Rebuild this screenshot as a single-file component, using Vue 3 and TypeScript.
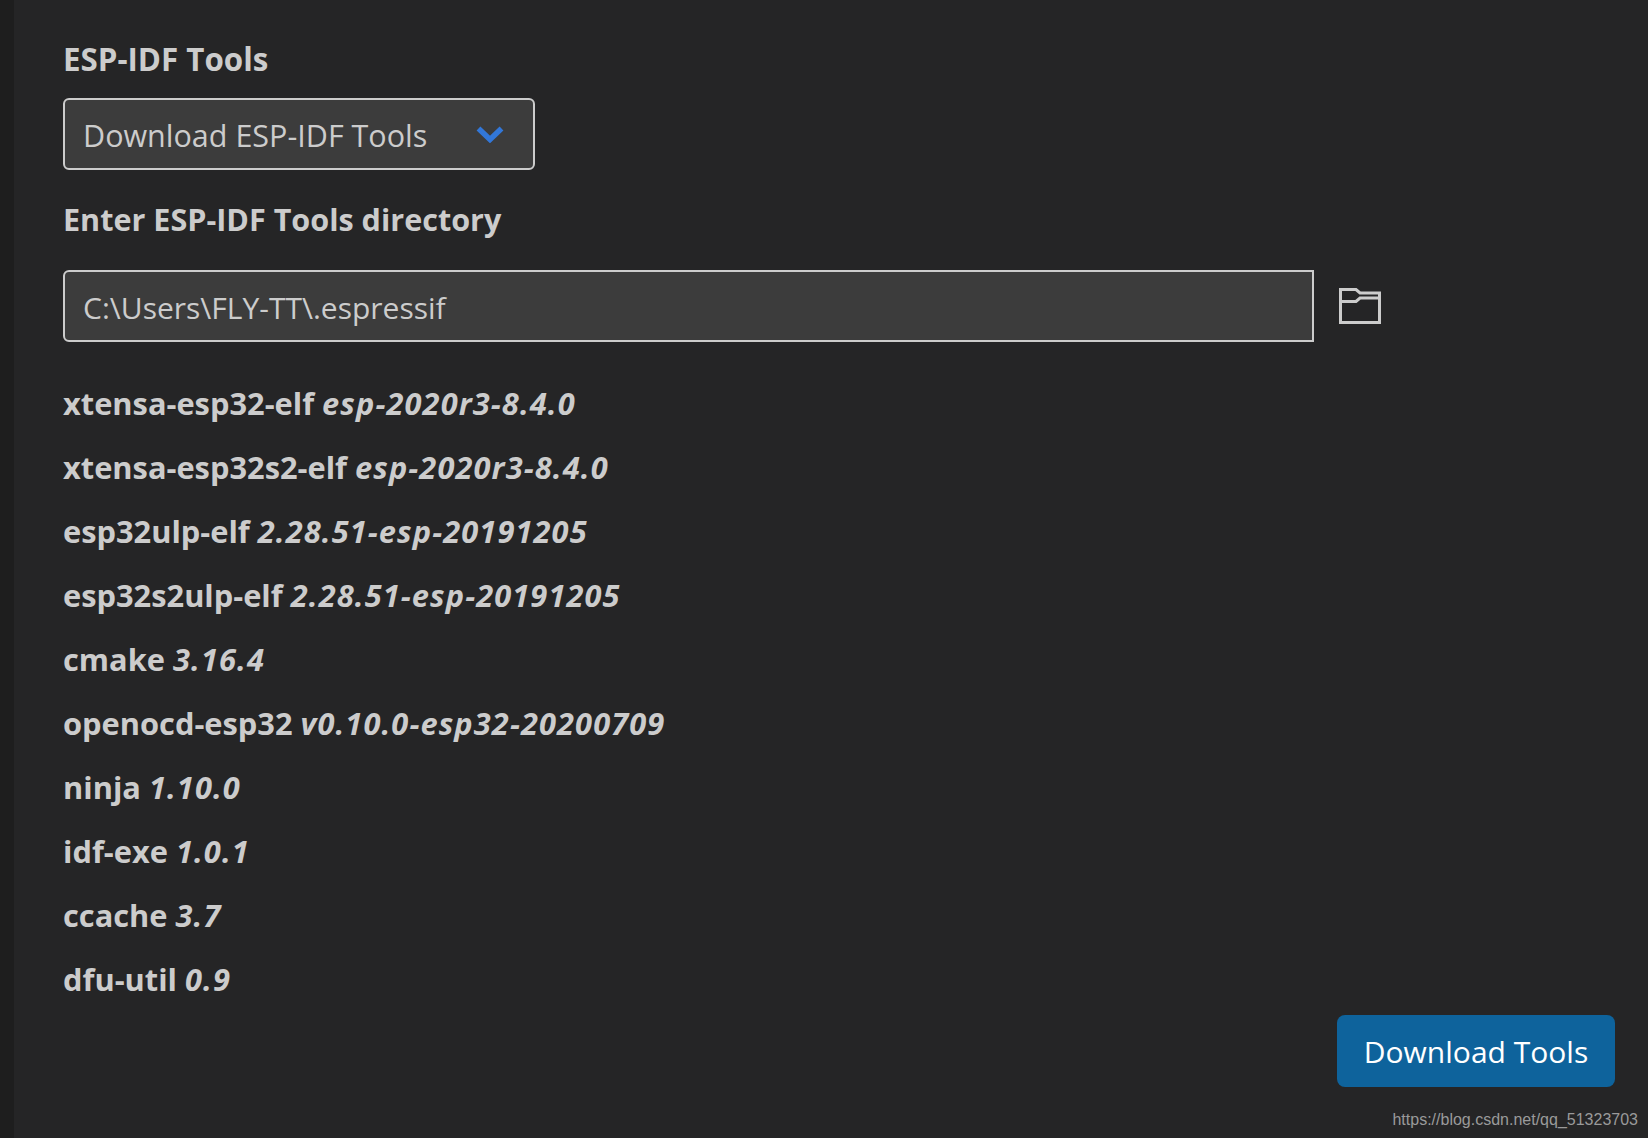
<template>
  <div class="page">
    <div class="strip"></div>
    <div class="main">
      <div class="label first">ESP-IDF Tools</div>
      <div class="select">
        <span>Download ESP-IDF Tools</span>
        <svg class="chev" width="28" height="18" viewBox="0 0 28 18">
          <path d="M2.5 3.5 L14 14.5 L25.5 3.5" fill="none" stroke="#3277d8" stroke-width="5.5" stroke-linejoin="miter" />
        </svg>
      </div>
      <div class="label second">Enter ESP-IDF Tools directory</div>
      <div class="dirRow">
        <div class="input">C:\Users\FLY-TT\.espressif</div>
        <svg class="folder" width="42" height="36" viewBox="0 0 42 36">
          <path d="M1.5 34.5 V1.5 H17 L21 5 H40.5 V34.5 Z M1.5 13.5 H17 L21 10 H40.5" fill="none" stroke="#cccccc" stroke-width="3" />
        </svg>
      </div>
      <div class="tools">
        <div v-for="t in tools" :key="t.name" class="tool">{{ t.name }} <i>{{ t.version }}</i></div>
      </div>
      <div class="actions">
        <button class="btn">Download Tools</button>
      </div>
    </div>
    <div class="mark">https://blog.csdn.net/qq_51323703</div>
  </div>
</template>

<script setup lang="ts">
const tools = [
  { name: "xtensa-esp32-elf", version: "esp-2020r3-8.4.0" },
  { name: "xtensa-esp32s2-elf", version: "esp-2020r3-8.4.0" },
  { name: "esp32ulp-elf", version: "2.28.51-esp-20191205" },
  { name: "esp32s2ulp-elf", version: "2.28.51-esp-20191205" },
  { name: "cmake", version: "3.16.4" },
  { name: "openocd-esp32", version: "v0.10.0-esp32-20200709" },
  { name: "ninja", version: "1.10.0" },
  { name: "idf-exe", version: "1.0.1" },
  { name: "ccache", version: "3.7" },
  { name: "dfu-util", version: "0.9" },
]
</script>

<style>
html, body {
  margin: 0;
  background: #252526;
}
</style>

<style scoped>
.page {
  position: relative;
  display: flex;
  width: 1648px;
  height: 1138px;
  overflow: hidden;
  background: #252526;
  color: #cccccc;
  font-family: "Open Sans", "Liberation Sans", sans-serif;
  font-size: 32px;
}
.strip {
  width: 14px;
  background: #1e1e1e;
}
.main {
  flex: 1;
  display: flex;
  flex-direction: column;
  padding: 37px 33px 0 49px;
}
.label {
  font-weight: 700;
  line-height: 44px;
}
.first {
  font-size: 31.3px;
}
.select {
  box-sizing: border-box;
  display: flex;
  align-items: center;
  justify-content: space-between;
  width: 472px;
  height: 72px;
  margin-top: 17px;
  padding: 2px 29px 0 18px;
  background: #3c3c3c;
  border: 2px solid #cccccc;
  border-radius: 6px;
  font-size: 30.5px;
}
.chev {
  margin-top: -2px;
}
.second {
  margin-top: 27px;
  font-size: 30.55px;
}
.dirRow {
  display: flex;
  align-items: center;
  gap: 25px;
  margin-top: 29px;
}
.input {
  box-sizing: border-box;
  width: 1251px;
  height: 72px;
  padding-left: 18px;
  line-height: 72px;
  background: #3c3c3c;
  border: 2px solid #cccccc;
  border-radius: 6px 0 0 6px;
  font-size: 30px;
}
.tools {
  display: flex;
  flex-direction: column;
  margin-top: 29px;
}
.tool {
  height: 64px;
  line-height: 64px;
  font-weight: 700;
  font-size: 30.8px;
  white-space: nowrap;
}
.tool i {
  letter-spacing: 1.1px;
}
.actions {
  display: flex;
  justify-content: flex-end;
  margin-top: 4px;
}
.btn {
  width: 278px;
  height: 72px;
  border: none;
  border-radius: 8px;
  background: #0e639c;
  color: #ffffff;
  font-family: inherit;
  font-size: 30px;
}
.mark {
  position: absolute;
  right: 10px;
  bottom: 9px;
  color: #9a9a9a;
  font-family: "Liberation Sans", Arial, sans-serif;
  font-size: 16px;
}
</style>
